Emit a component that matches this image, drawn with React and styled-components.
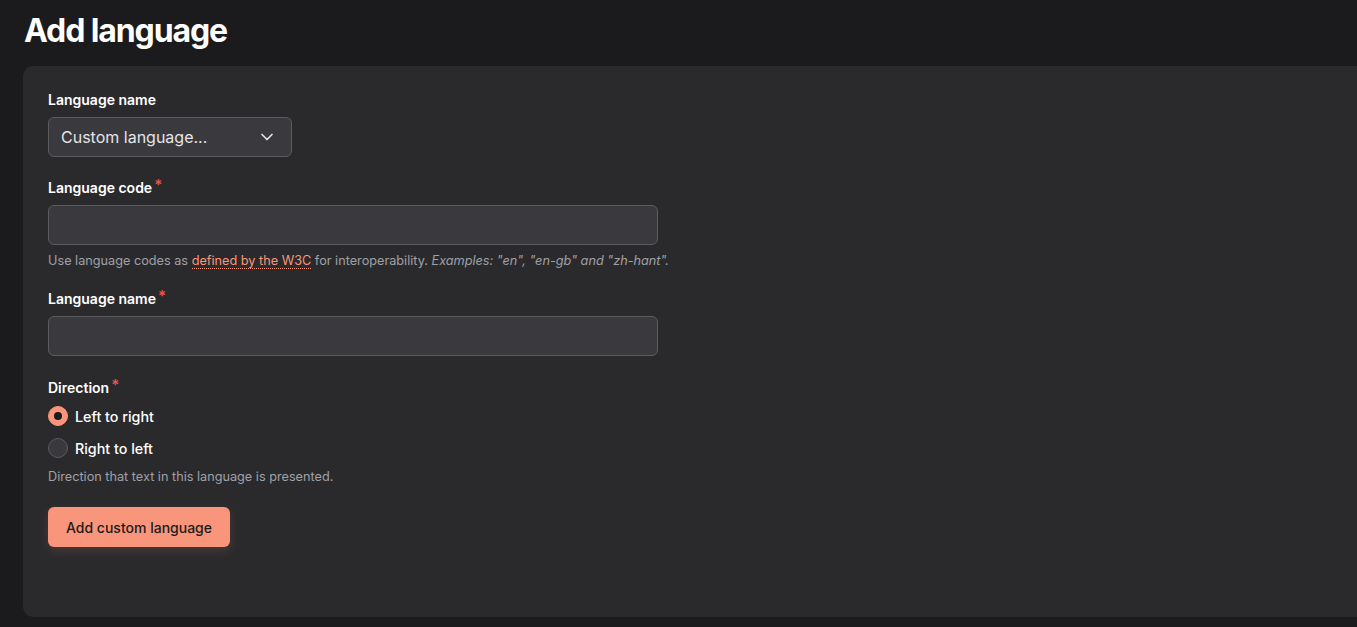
import React from "react";
import styled, { createGlobalStyle } from "styled-components";

const Global = createGlobalStyle`
  html, body { margin: 0; padding: 0; background: #1b1b1d; overflow: hidden; }
  body { font-family: Inter, "Noto Sans", sans-serif; color: #fff; }
`;

const Page = styled.div`
  padding: 8px 0 0 23px;
  height: 627px;
  box-sizing: border-box;
  overflow: hidden;
`;
const Title = styled.h1`
  margin: 0 0 13px 1px;
  font-size: 32px;
  font-weight: 700;
  letter-spacing: -1.1px;
  line-height: 45px;
  color: #fff;
`;
const Card = styled.div`
  background: #2a2a2d;
  border-radius: 10px 0 0 10px;
  margin-right: -10px;
  padding: 25px 25px 41px;
  height: 551px;
  box-sizing: border-box;
`;
const Field = styled.div`
  margin-bottom: ${(p) => p.$mb}px;
`;
const Label = styled.div`
  font-size: 14px;
  font-weight: 600;
  line-height: 18px;
  margin-bottom: 8px;
  color: #fff;
`;
const Star = styled.span`
  color: #e5564e;
  margin-left: 2px;
  font-size: 15px;
  vertical-align: 3px;
`;
const Select = styled.div`
  width: 244px;
  height: 40px;
  box-sizing: border-box;
  border: 1px solid #5b5b60;
  background: #3a393e;
  border-radius: 6px;
  display: flex;
  align-items: center;
  justify-content: space-between;
  padding: 0 14px 0 12px;
  font-size: 16px;
  color: #e4e4e6;
`;
const Input = styled.div`
  width: 610px;
  height: 40px;
  box-sizing: border-box;
  border: 1px solid #5b5b60;
  background: #3a393e;
  border-radius: 6px;
`;
const Help = styled.div`
  font-size: 12.7px;
  color: #a0a0a6;
  margin-top: ${(p) => p.$mt ?? 8}px;
  line-height: 16px;
`;
const Link = styled.span`
  color: #f9957a;
  border-bottom: 1px dotted #f9957a;
`;
const Radio = styled.div`
  display: flex;
  align-items: center;
  gap: 7px;
  font-size: 14.3px;
  font-weight: 500;
  height: 22px;
  margin-bottom: 10px;
`;
const Dot = styled.span`
  width: 20px;
  height: 20px;
  border-radius: 50%;
  box-sizing: border-box;
  background: ${(p) => (p.$on ? "#f9957a" : "#3a393e")};
  border: 1px solid ${(p) => (p.$on ? "#f9957a" : "#5b5b60")};
  display: flex;
  align-items: center;
  justify-content: center;
  &::after {
    content: "";
    display: ${(p) => (p.$on ? "block" : "none")};
    width: 8px;
    height: 8px;
    border-radius: 50%;
    background: #1b1b1d;
  }
`;
const Button = styled.button`
  margin-top: 22px;
  height: 40px;
  width: 182px;
  border: none;
  border-radius: 6px;
  background: #f9957a;
  color: #1b1b1d;
  font-family: Inter, sans-serif;
  font-size: 14px;
  font-weight: 500;
  box-shadow: 0 4px 10px rgba(249, 149, 122, 0.15);
`;

export default function App() {
  return (
    <Page>
      <Global />
      <Title>Add language</Title>
      <Card>
        <Field $mb={19}>
          <Label>Language name</Label>
          <Select>
            <span>Custom language...</span>
            <svg width="20" height="20" viewBox="0 0 24 24" fill="none" stroke="#e4e4e6" strokeWidth="2" strokeLinecap="round" strokeLinejoin="round">
              <path d="m6 9 6 6 6-6" />
            </svg>
          </Select>
        </Field>
        <Field $mb={18}>
          <Label>Language code<Star>*</Star></Label>
          <Input />
          <Help>
            Use language codes as <Link>defined by the W3C</Link> for interoperability.{" "}
            <i>Examples: "en", "en-gb" and "zh-hant".</i>
          </Help>
        </Field>
        <Field $mb={20}>
          <Label>Language name<Star>*</Star></Label>
          <Input />
        </Field>
        <Field $mb={0}>
          <Label>Direction<Star>*</Star></Label>
          <Radio><Dot $on />Left to right</Radio>
          <Radio><Dot />Right to left</Radio>
          <Help $mt={0}>Direction that text in this language is presented.</Help>
        </Field>
        <Button>Add custom language</Button>
      </Card>
    </Page>
  );
}
